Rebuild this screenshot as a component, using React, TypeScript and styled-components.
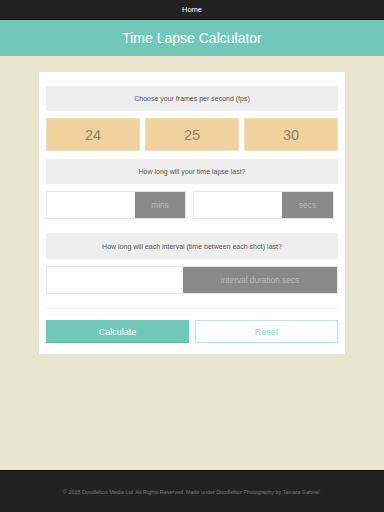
import React from "react";
import styled, { createGlobalStyle } from "styled-components";

const Global = createGlobalStyle`
  html, body { margin: 0; padding: 0; }
  body {
    background: #e8e5d0;
    font-family: "Liberation Sans", Arial, sans-serif;
    width: 384px;
    height: 512px;
    overflow: hidden;
  }
  #root { height: 512px; }
`;

const Page = styled.div`
  display: flex;
  flex-direction: column;
  height: 512px;
`;

const Nav = styled.nav`
  height: 19px;
  background: #222;
  border-bottom: 1px solid #080808;
  display: flex;
  align-items: center;
  justify-content: center;
  color: #fff;
  font-size: 7.5px;
`;

const Header = styled.header`
  height: 36px;
  background: #71c8b8;
  display: flex;
  align-items: center;
  justify-content: center;
  color: #fff;
  font-size: 14px;
`;

const Main = styled.main`
  flex: 1;
  display: flex;
  justify-content: center;
  align-items: flex-start;
  padding-top: 16px;
`;

const Card = styled.section`
  width: 292px;
  background: #fff;
  padding: 14px 7px 11px;
  display: flex;
  flex-direction: column;
`;

const Prompt = styled.div<{ $mt?: number; $h?: number }>`
  margin-top: ${(p) => p.$mt ?? 0}px;
  height: ${(p) => p.$h ?? 25}px;
  background: #eee;
  display: flex;
  align-items: center;
  justify-content: center;
  color: #555;
  font-size: 7px;
`;

const FpsRow = styled.div`
  margin-top: 7px;
  display: grid;
  grid-template-columns: repeat(3, 1fr);
  gap: 5px;
`;

const FpsButton = styled.button`
  height: 33px;
  background: #f0d29e;
  border: 1px solid #f6dfb4;
  color: #8d7f66;
  font-family: inherit;
  font-size: 14.5px;
  padding: 0;
  display: flex;
  align-items: center;
  justify-content: center;
`;

const InputRow = styled.div<{ $mt: number; $cols: string }>`
  margin-top: ${(p) => p.$mt}px;
  display: grid;
  grid-template-columns: ${(p) => p.$cols};
  gap: 7px;
`;

const Group = styled.div<{ $addon: number }>`
  display: grid;
  grid-template-columns: 1fr ${(p) => p.$addon}px;
  height: 28px;
`;

const Field = styled.div`
  background: #fff;
  border: 1px solid #e6e6e6;
  border-right: none;
`;

const Addon = styled.div`
  background: #898989;
  border: 1px solid #e6e6e6;
  border-left: none;
  color: #b9b9b9;
  font-size: 8.3px;
  display: flex;
  align-items: center;
  justify-content: center;
`;

const Rule = styled.hr`
  margin: 14px 0 0;
  border: none;
  border-top: 1px solid #eee;
`;

const Buttons = styled.div`
  margin-top: 11px;
  display: grid;
  grid-template-columns: 143px 143px;
  justify-content: space-between;
`;

const Btn = styled.button<{ $primary?: boolean }>`
  height: 23px;
  font-family: inherit;
  font-size: 9px;
  padding: 0;
  background: ${(p) => (p.$primary ? "#71c8b8" : "#fff")};
  color: ${(p) => (p.$primary ? "#fff" : "#8fd4c7")};
  border: 1px solid ${(p) => (p.$primary ? "#71c8b8" : "#b9e5dc")};
  border-bottom-color: ${(p) => (p.$primary ? "#63b5a6" : "#b9e5dc")};
`;

const Footer = styled.footer`
  height: 41px;
  background: #222;
  border-top: 1px solid #0d0d0d;
  display: flex;
  align-items: center;
  justify-content: center;
  color: #777;
  font-size: 5.4px;
`;

export default function App() {
  return (
    <Page>
      <Global />
      <Nav>Home</Nav>
      <Header>Time Lapse Calculator</Header>
      <Main>
        <Card>
          <Prompt>Choose your frames per second (fps)</Prompt>
          <FpsRow>
            <FpsButton>24</FpsButton>
            <FpsButton>25</FpsButton>
            <FpsButton>30</FpsButton>
          </FpsRow>
          <Prompt $mt={8}>How long will your time lapse last?</Prompt>
          <InputRow $mt={7} $cols="140px 141px">
            <Group $addon={51}>
              <Field />
              <Addon>mins</Addon>
            </Group>
            <Group $addon={52}>
              <Field />
              <Addon>secs</Addon>
            </Group>
          </InputRow>
          <Prompt $mt={14} $h={26}>
            How long will each interval (time between each shot) last?
          </Prompt>
          <InputRow $mt={7} $cols="1fr">
            <Group $addon={155}>
              <Field />
              <Addon>interval duration secs</Addon>
            </Group>
          </InputRow>
          <Rule />
          <Buttons>
            <Btn $primary>Calculate</Btn>
            <Btn>Reset</Btn>
          </Buttons>
        </Card>
      </Main>
      <Footer>
        © 2015 Doodlebox Media Ltd. All Rights Reserved. Made under Doodlebox
        Photography by Tamara Gabriel.
      </Footer>
    </Page>
  );
}
